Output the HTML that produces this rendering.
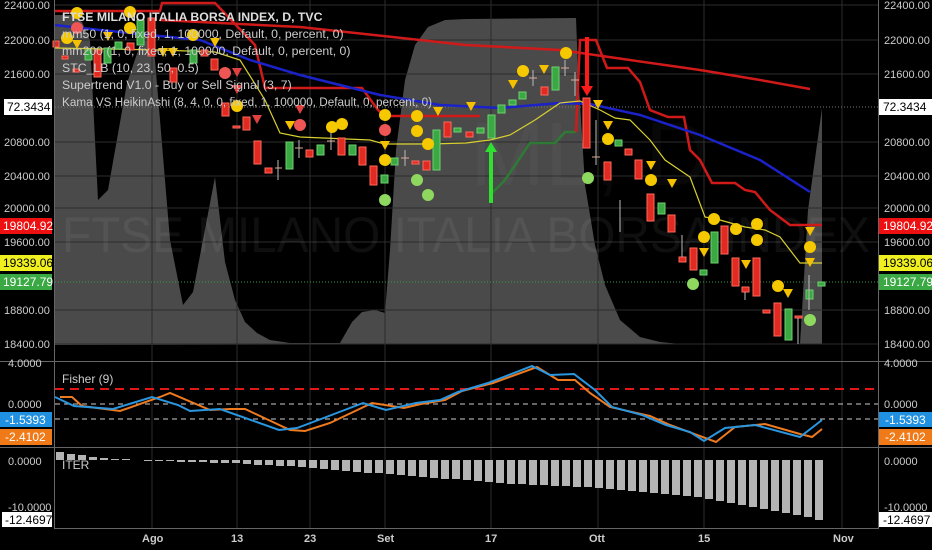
<!DOCTYPE html>
<html><head><meta charset="utf-8"><style>
html,body{margin:0;padding:0;background:#000;width:932px;height:550px;overflow:hidden}
svg{display:block}
text{font-family:"Liberation Sans",sans-serif}
</style></head><body>
<svg width="932" height="550" viewBox="0 0 932 550" xmlns="http://www.w3.org/2000/svg">
<rect width="932" height="550" fill="#000"/>
<!-- gray area -->
<path d="M55,345 L55,15 L70,15 L82,22 L90,40 L98,200 L108,190 L127,83 L140,45 L150,30 L155,60 L160,120 L170,240 L183,305 L193,292 L215,177 L225,262 L235,300 L245,322 L257,333 L270,340 L290,343 L340,343 L352,322 L362,312 L375,310 L385,313 L390,250 L396,150 L405,80 L415,45 L428,27 L445,20 L466,19 L576,18 L578,70 L585,185 L595,245 L605,285 L620,320 L640,337 L660,342 L680,344 Z" fill="#4a4a4a"/>
<path d="M800,344 L808,210 L822,108 L822,344 Z" fill="#4a4a4a"/>
<!-- grid -->
<g stroke="#2c2c2c" stroke-width="1">
<line x1="55" y1="5" x2="878" y2="5"/><line x1="55" y1="40" x2="878" y2="40"/><line x1="55" y1="74" x2="878" y2="74"/><line x1="55" y1="142" x2="878" y2="142"/><line x1="55" y1="176" x2="878" y2="176"/><line x1="55" y1="208" x2="878" y2="208"/><line x1="55" y1="242" x2="878" y2="242"/><line x1="55" y1="310" x2="878" y2="310"/><line x1="55" y1="344" x2="878" y2="344"/>
<line x1="152" y1="0" x2="152" y2="528"/><line x1="237" y1="0" x2="237" y2="528"/><line x1="310" y1="0" x2="310" y2="528"/><line x1="385" y1="0" x2="385" y2="528"/><line x1="491" y1="0" x2="491" y2="528"/><line x1="598" y1="0" x2="598" y2="528"/><line x1="704" y1="0" x2="704" y2="528"/><line x1="842" y1="0" x2="842" y2="528"/>
</g>
<!-- watermark -->
<text x="62" y="252" font-size="50" fill="#ffffff" fill-opacity="0.06" textLength="808" lengthAdjust="spacingAndGlyphs">FTSE MILANO ITALIA BORSA INDEX</text>
<text x="470" y="185" font-size="90" fill="#ffffff" fill-opacity="0.03">ML, D</text>
<!-- dotted lines -->
<line x1="55" y1="107" x2="878" y2="107" stroke="#777" stroke-dasharray="1,2"/>
<line x1="55" y1="282" x2="878" y2="282" stroke="#3a9a4a" stroke-dasharray="1,2"/>
<!-- lines -->
<polyline fill="none" stroke="#d01a1a" stroke-width="2.5" points="55,11 160,11 162,3 215,3 255,45 265,88 362,88 378,110 385,116 480,116"/>
<polyline fill="none" stroke="#2e7a35" stroke-width="2.5" points="490,195 505,180 530,143 555,143 565,132 576,132"/>
<polyline fill="none" stroke="#d01a1a" stroke-width="2.5" points="576,132 580,40 596,40 607,68 628,68 640,82 650,110 668,117 684,117 690,150 700,160 712,183 735,183 745,190 755,192 770,210 790,225 822,225"/>
<polyline fill="none" stroke="#d01a1a" stroke-width="2.5" points="160,20 300,27 466,45 560,50 630,60 700,70 760,80 810,89"/>
<polyline fill="none" stroke="#1a22c8" stroke-width="2.5" points="55,25 100,30 200,40 250,60 300,75 380,95 440,105 500,108 560,103 590,104 640,115 700,135 760,160 810,192"/>
<polyline fill="none" stroke="#d8d030" stroke-width="1.2" points="55,48 160,50 215,52 240,60 265,100 280,133 300,137 370,140 384,144 430,144 466,143 490,140 510,135 535,120 560,103 580,101 600,110 615,118 630,120 650,140 665,160 690,177 705,217 720,220 745,227 765,230 780,237 800,263 822,263"/>
<!-- candles -->
<g stroke-width="1">
<g fill="#e02a22" stroke="#ff6a5a">
<rect x="53" y="41" width="6" height="6"/><rect x="62" y="56" width="6" height="3"/><rect x="73" y="69" width="6" height="3"/><rect x="94" y="50" width="7" height="27"/><rect x="127" y="43" width="7" height="7"/><rect x="148" y="18" width="7" height="38"/><rect x="170" y="68" width="7" height="14"/><rect x="201" y="50" width="7" height="6"/><rect x="211" y="59" width="7" height="11"/><rect x="222" y="103" width="7" height="13"/><rect x="233" y="126" width="7" height="2"/><rect x="243" y="117" width="7" height="13"/><rect x="254" y="141" width="7" height="23"/><rect x="265" y="168" width="7" height="5"/><rect x="306" y="150" width="7" height="7"/><rect x="338" y="138" width="7" height="17"/><rect x="359" y="147" width="7" height="18"/><rect x="370" y="166" width="7" height="19"/><rect x="412" y="161" width="7" height="3"/><rect x="423" y="161" width="7" height="9"/><rect x="444" y="122" width="7" height="15"/><rect x="466" y="132" width="7" height="5"/><rect x="541" y="87" width="7" height="8"/><rect x="583" y="98" width="7" height="50"/><rect x="604" y="162" width="7" height="18"/><rect x="625" y="149" width="7" height="6"/><rect x="635" y="160" width="7" height="19"/><rect x="647" y="194" width="7" height="27"/><rect x="668" y="215" width="7" height="17"/><rect x="679" y="257" width="7" height="5"/><rect x="690" y="248" width="7" height="22"/><rect x="721" y="226" width="7" height="28"/><rect x="732" y="258" width="7" height="28"/><rect x="742" y="287" width="7" height="5"/><rect x="753" y="258" width="7" height="38"/><rect x="763" y="310" width="7" height="3"/><rect x="774" y="303" width="7" height="33"/><rect x="795" y="316" width="7" height="2"/>
</g>
<g fill="#3aa843" stroke="#70d070">
<rect x="85" y="50" width="7" height="10"/><rect x="104" y="48" width="7" height="15"/><rect x="115" y="42" width="7" height="7"/><rect x="137" y="20" width="7" height="25"/><rect x="190" y="50" width="7" height="13"/><rect x="286" y="142" width="7" height="27"/><rect x="317" y="145" width="7" height="10"/><rect x="349" y="145" width="7" height="10"/><rect x="381" y="175" width="7" height="8"/><rect x="391" y="158" width="7" height="7"/><rect x="433" y="130" width="7" height="40"/><rect x="454" y="128" width="7" height="4"/><rect x="477" y="128" width="7" height="5"/><rect x="488" y="115" width="7" height="23"/><rect x="498" y="105" width="7" height="8"/><rect x="509" y="100" width="7" height="5"/><rect x="519" y="92" width="7" height="7"/><rect x="552" y="67" width="7" height="23"/><rect x="615" y="140" width="7" height="6"/><rect x="658" y="203" width="7" height="11"/><rect x="700" y="270" width="7" height="5"/><rect x="711" y="232" width="7" height="31"/><rect x="785" y="309" width="7" height="31"/><rect x="806" y="290" width="7" height="9"/><rect x="818" y="282" width="7" height="4"/>
</g>
<g stroke="#bbbbbb">
<line x1="278" y1="160" x2="278" y2="180"/><line x1="299" y1="140" x2="299" y2="158"/><line x1="331" y1="132" x2="331" y2="150"/><line x1="405" y1="150" x2="405" y2="166"/><line x1="533" y1="70" x2="533" y2="86"/><line x1="565" y1="60" x2="565" y2="76"/><line x1="575" y1="72" x2="575" y2="96"/><line x1="596" y1="120" x2="596" y2="165"/><line x1="798" y1="318" x2="798" y2="344"/><line x1="809" y1="275" x2="809" y2="310"/><line x1="745" y1="292" x2="745" y2="300"/><line x1="682" y1="235" x2="682" y2="257"/><line x1="620" y1="200" x2="620" y2="232"/>
</g>
<g stroke="#ddaa99"><line x1="275" y1="168" x2="282" y2="168"/><line x1="295" y1="148" x2="303" y2="148"/><line x1="327" y1="141" x2="335" y2="141"/><line x1="401" y1="158" x2="409" y2="158"/><line x1="529" y1="78" x2="537" y2="78"/><line x1="561" y1="68" x2="569" y2="68"/><line x1="571" y1="80" x2="579" y2="80"/><line x1="592" y1="157" x2="600" y2="157"/></g>
</g>
<!-- arrows -->
<path d="M489,203 L489,152 L485,152 L491,142 L497,152 L493,152 L493,203 Z" fill="#30e030"/>
<path d="M585,37 L585,86 L581,86 L587,96 L593,86 L589,86 L589,37 Z" fill="#ff1a1a"/>
<!-- markers -->
<g fill="#f5c800">
<circle cx="77" cy="13" r="6"/><circle cx="130" cy="12" r="6"/><circle cx="130" cy="28" r="6"/><circle cx="67" cy="38" r="6"/><circle cx="193" cy="35" r="6"/><circle cx="237" cy="106" r="6"/><circle cx="332" cy="127" r="6"/><circle cx="342" cy="124" r="6"/><circle cx="385" cy="115" r="6"/><circle cx="385" cy="160" r="6"/><circle cx="417" cy="116" r="6"/><circle cx="417" cy="131" r="6"/><circle cx="428" cy="144" r="6"/>
<circle cx="566" cy="53" r="6"/><circle cx="523" cy="71" r="6"/><circle cx="608" cy="139" r="6"/><circle cx="651" cy="180" r="6"/><circle cx="714" cy="219" r="6"/><circle cx="704" cy="237" r="6"/><circle cx="736" cy="229" r="6"/><circle cx="757" cy="224" r="6"/><circle cx="757" cy="240" r="6"/><circle cx="778" cy="286" r="6"/><circle cx="810" cy="247" r="6"/>
</g>
<g fill="#ee5555"><circle cx="77" cy="28" r="6"/><circle cx="225" cy="73" r="6"/><circle cx="300" cy="125" r="6"/><circle cx="385" cy="130" r="6"/></g>
<g fill="#8ed860"><circle cx="385" cy="200" r="6"/><circle cx="417" cy="180" r="6"/><circle cx="428" cy="195" r="6"/><circle cx="588" cy="178" r="6"/><circle cx="693" cy="284" r="6"/><circle cx="810" cy="320" r="6"/></g>
<g fill="#f5c000">
<path d="M72,40h10l-5,9z"/><path d="M103,32h10l-5,9z"/><path d="M158,48h10l-5,9z"/><path d="M168,48h10l-5,9z"/><path d="M210,38h10l-5,9z"/><path d="M285,121h10l-5,9z"/><path d="M380,141h10l-5,9z"/><path d="M433,107h10l-5,9z"/><path d="M466,102h10l-5,9z"/><path d="M508,80h10l-5,9z"/><path d="M539,65h10l-5,9z"/><path d="M593,100h10l-5,9z"/><path d="M603,121h10l-5,9z"/><path d="M646,161h10l-5,9z"/><path d="M667,179h10l-5,9z"/><path d="M699,248h10l-5,9z"/><path d="M741,260h10l-5,9z"/><path d="M783,289h10l-5,9z"/><path d="M805,227h10l-5,9z"/><path d="M805,258h10l-5,9z"/>
</g>
<g fill="#e04040"><path d="M232,68h10l-5,9z"/><path d="M232,85h10l-5,9z"/><path d="M252,115h10l-5,9z"/><path d="M295,105h10l-5,9z"/></g>
<!-- legend -->
<g font-size="12.3" fill="#cccccc">
<text x="62" y="21" font-weight="bold" fill="#dddddd">FTSE MILANO ITALIA BORSA INDEX, D, TVC</text>
<text x="62" y="38">mm50 (1, 0, fixed, 1, 100000, Default, 0, percent, 0)</text>
<text x="62" y="55">mm200 (1, 0, fixed, 1, 100000, Default, 0, percent, 0)</text>
<text x="62" y="72">STC_LB (10, 23, 50, 0.5)</text>
<text x="62" y="89">Supertrend V1.0 - Buy or Sell Signal (3, 7)</text>
<text x="62" y="106" textLength="370" lengthAdjust="spacingAndGlyphs">Kama VS HeikinAshi (8, 4, 0, 0, fixed, 1, 100000, Default, 0, percent, 0)</text>
</g>
<!-- panel separators & borders -->
<line x1="0" y1="361.5" x2="932" y2="361.5" stroke="#666"/>
<line x1="0" y1="447.5" x2="932" y2="447.5" stroke="#666"/>
<line x1="55" y1="528.5" x2="878" y2="528.5" stroke="#666"/>
<line x1="54.5" y1="0" x2="54.5" y2="529" stroke="#666"/>
<line x1="878.5" y1="0" x2="878.5" y2="529" stroke="#666"/>
<!-- fisher -->
<line x1="55" y1="389" x2="878" y2="389" stroke="#e01818" stroke-width="2" stroke-dasharray="9,6"/>
<line x1="55" y1="404" x2="878" y2="404" stroke="#ccc" stroke-dasharray="5,4"/>
<line x1="55" y1="419" x2="878" y2="419" stroke="#ccc" stroke-dasharray="5,4"/>
<text x="62" y="383" font-size="12" fill="#cccccc">Fisher (9)</text>
<polyline fill="none" stroke="#ee7a20" stroke-width="2" points="60,397 72,397 82,406 120,411 160,397 170,393 210,410 230,409 245,409 290,430 305,431 330,423 372,403 404,408 421,404 445,400 462,391 493,383 537,367 558,380 575,380 590,393 610,407 650,416 670,425 716,442 735,427 765,424 800,434 812,437 822,429"/>
<polyline fill="none" stroke="#2a96e0" stroke-width="2" points="55,397 74,406 113,409 152,397 178,405 190,411 220,409 279,430 297,428 321,419 363,403 386,410 416,403 440,400 458,392 488,383 532,366 550,375 574,374 595,390 612,407 642,415 666,425 690,432 704,441 725,428 755,425 800,437 822,420"/>
<!-- ITER -->
<text x="62" y="469" font-size="12" fill="#cccccc">ITER</text>
<g fill="#b4b4b4">
<rect x="56" y="452" width="8" height="8"/><rect x="67" y="454" width="8" height="6"/><rect x="78" y="455" width="8" height="5"/><rect x="89" y="457" width="8" height="3"/><rect x="100" y="458" width="8" height="2"/><rect x="111" y="459" width="8" height="1"/><rect x="122" y="459" width="8" height="1"/>
<rect x="144" y="460" width="8" height="1"/><rect x="155" y="460" width="8" height="1"/><rect x="166" y="460" width="8" height="1"/><rect x="177" y="460" width="8" height="2"/><rect x="188" y="460" width="8" height="2"/><rect x="199" y="460" width="8" height="2"/><rect x="210" y="460" width="8" height="3"/><rect x="221" y="460" width="8" height="3"/><rect x="232" y="460" width="8" height="3"/><rect x="243" y="460" width="8" height="4"/><rect x="254" y="460" width="8" height="5"/><rect x="265" y="460" width="8" height="5"/><rect x="276" y="460" width="8" height="6"/><rect x="287" y="460" width="8" height="6"/><rect x="298" y="460" width="8" height="7"/><rect x="309" y="460" width="8" height="8"/><rect x="320" y="460" width="8" height="9"/><rect x="331" y="460" width="8" height="10"/><rect x="342" y="460" width="8" height="11"/><rect x="353" y="460" width="8" height="12"/><rect x="364" y="460" width="8" height="13"/><rect x="375" y="460" width="8" height="13"/><rect x="386" y="460" width="8" height="14"/><rect x="397" y="460" width="8" height="15"/><rect x="408" y="460" width="8" height="16"/><rect x="419" y="460" width="8" height="17"/><rect x="430" y="460" width="8" height="18"/><rect x="441" y="460" width="8" height="19"/><rect x="452" y="460" width="8" height="19"/><rect x="463" y="460" width="8" height="20"/><rect x="474" y="460" width="8" height="21"/><rect x="485" y="460" width="8" height="22"/><rect x="496" y="460" width="8" height="23"/><rect x="507" y="460" width="8" height="24"/><rect x="518" y="460" width="8" height="24"/><rect x="529" y="460" width="8" height="25"/><rect x="540" y="460" width="8" height="25"/><rect x="551" y="460" width="8" height="26"/><rect x="562" y="460" width="8" height="26"/><rect x="573" y="460" width="8" height="27"/><rect x="584" y="460" width="8" height="27"/><rect x="595" y="460" width="8" height="28"/><rect x="606" y="460" width="8" height="29"/><rect x="617" y="460" width="8" height="30"/><rect x="628" y="460" width="8" height="31"/><rect x="639" y="460" width="8" height="32"/><rect x="650" y="460" width="8" height="33"/><rect x="661" y="460" width="8" height="34"/><rect x="672" y="460" width="8" height="35"/><rect x="683" y="460" width="8" height="36"/><rect x="694" y="460" width="8" height="37"/><rect x="705" y="460" width="8" height="39"/><rect x="716" y="460" width="8" height="41"/><rect x="727" y="460" width="8" height="43"/><rect x="738" y="460" width="8" height="45"/><rect x="749" y="460" width="8" height="47"/><rect x="760" y="460" width="8" height="49"/><rect x="771" y="460" width="8" height="51"/><rect x="782" y="460" width="8" height="53"/><rect x="793" y="460" width="8" height="55"/><rect x="804" y="460" width="8" height="57"/><rect x="815" y="460" width="8" height="60"/>
</g>
<!-- axis labels -->
<g font-size="11" fill="#cccccc">
<text x="4" y="9">22400.00</text><text x="4" y="44">22000.00</text><text x="4" y="78">21600.00</text><text x="4" y="146">20800.00</text><text x="4" y="180">20400.00</text><text x="4" y="212">20000.00</text><text x="4" y="246">19600.00</text><text x="4" y="314">18800.00</text><text x="4" y="348">18400.00</text>
<text x="884" y="9">22400.00</text><text x="884" y="44">22000.00</text><text x="884" y="78">21600.00</text><text x="884" y="146">20800.00</text><text x="884" y="180">20400.00</text><text x="884" y="212">20000.00</text><text x="884" y="246">19600.00</text><text x="884" y="314">18800.00</text><text x="884" y="348">18400.00</text>
<text x="8" y="367">4.0000</text><text x="8" y="408">0.0000</text><text x="884" y="367">4.0000</text><text x="884" y="408">0.0000</text>
<text x="8" y="465">0.0000</text><text x="884" y="465">0.0000</text>
<text x="8" y="511">-10.0000</text><text x="884" y="511">-10.0000</text>
<text x="142" y="542" font-weight="bold">Ago</text><text x="231" y="542" font-weight="bold">13</text><text x="304" y="542" font-weight="bold">23</text><text x="377" y="542" font-weight="bold">Set</text><text x="485" y="542" font-weight="bold">17</text><text x="589" y="542" font-weight="bold">Ott</text><text x="698" y="542" font-weight="bold">15</text><text x="833" y="542" font-weight="bold">Nov</text>
</g>
<!-- colored label boxes -->
<g font-size="12">
<rect x="4" y="99" width="48" height="16" fill="#fff"/><text x="7" y="111" fill="#000">72.3434</text>
<rect x="879" y="99" width="53" height="16" fill="#fff"/><text x="883" y="111" fill="#000">72.3434</text>
<rect x="0" y="218" width="52" height="16" fill="#ee1010"/><text x="3" y="230" fill="#fff">19804.92</text>
<rect x="879" y="218" width="53" height="16" fill="#ee1010"/><text x="883" y="230" fill="#fff">19804.92</text>
<rect x="0" y="255" width="52" height="16" fill="#f0f020"/><text x="3" y="267" fill="#000">19339.06</text>
<rect x="879" y="255" width="53" height="16" fill="#f0f020"/><text x="883" y="267" fill="#000">19339.06</text>
<rect x="0" y="274" width="52" height="16" fill="#3aa843"/><text x="3" y="286" fill="#fff">19127.79</text>
<rect x="879" y="274" width="53" height="16" fill="#3aa843"/><text x="883" y="286" fill="#fff">19127.79</text>
<rect x="0" y="412" width="52" height="15" fill="#2090e0"/><text x="5" y="424" fill="#fff">-1.5393</text>
<rect x="879" y="412" width="53" height="15" fill="#2090e0"/><text x="885" y="424" fill="#fff">-1.5393</text>
<rect x="0" y="429" width="52" height="16" fill="#f07a18"/><text x="5" y="441" fill="#fff">-2.4102</text>
<rect x="879" y="429" width="53" height="16" fill="#f07a18"/><text x="885" y="441" fill="#fff">-2.4102</text>
<rect x="2" y="512" width="50" height="15" fill="#fff"/><text x="5" y="524" fill="#000">-12.4697</text>
<rect x="879" y="512" width="53" height="15" fill="#fff"/><text x="883" y="524" fill="#000">-12.4697</text>
</g>
</svg>
</body></html>
